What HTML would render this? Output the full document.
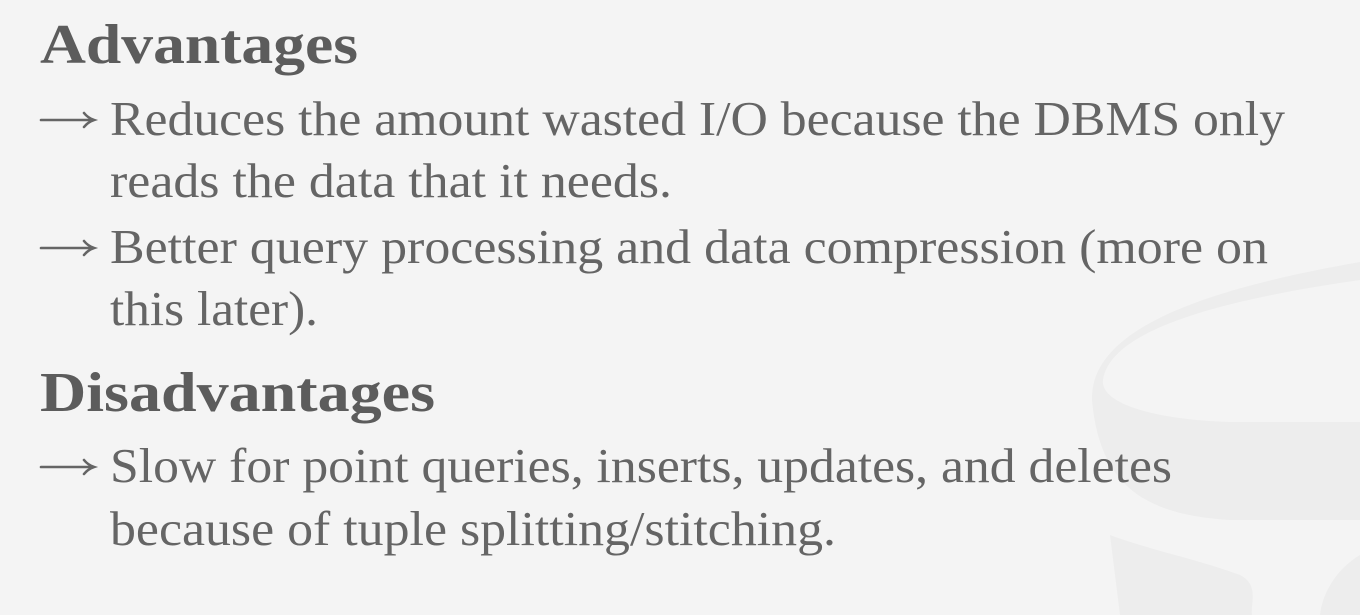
<!DOCTYPE html>
<html><head><meta charset="utf-8"><style>
html,body{margin:0;padding:0;background:#f4f4f4;width:1360px;height:615px;overflow:hidden}
svg{display:block}
text{font-family:"Liberation Serif",serif;fill:#656565}
.h{font-weight:bold;font-size:56px;fill:#5c5c5c}
.b{font-size:49px}
</style></head><body>
<svg width="1360" height="615" viewBox="0 0 1360 615" xmlns="http://www.w3.org/2000/svg">
<defs><g id="ar" fill="none" stroke="#656565" stroke-width="2.6" stroke-linecap="round"><path d="M41 0 H93"/><path d="M84 -7 Q88 -2 94 0 Q88 2 84 7"/></g></defs>
<rect width="1360" height="615" fill="#f4f4f4"/>
<g fill="#ededed">
<path d="M1092 400 C1090 330 1200 290 1360 262 L1360 280 C1220 300 1110 330 1103 380 C1100 405 1160 420 1230 422 L1360 422 L1360 520 L1230 520 C1150 515 1100 490 1092 400Z"/>
<path d="M1110 535 C1150 550 1200 560 1240 575 C1260 585 1250 605 1252 615 L1120 615 Z"/>
<path d="M1320 615 C1322 595 1335 570 1360 555 L1360 615 Z"/>
</g>
<text class="h" x="40" y="63" textLength="318" lengthAdjust="spacingAndGlyphs">Advantages</text>
<use href="#ar" y="120"/>
<text class="b" x="110" y="135" textLength="1175" lengthAdjust="spacingAndGlyphs">Reduces the amount wasted I/O because the DBMS only</text>
<text class="b" x="110" y="197" textLength="562" lengthAdjust="spacingAndGlyphs">reads the data that it needs.</text>
<use href="#ar" y="248"/>
<text class="b" x="110" y="263" textLength="1158" lengthAdjust="spacingAndGlyphs">Better query processing and data compression (more on</text>
<text class="b" x="110" y="325" textLength="208" lengthAdjust="spacingAndGlyphs">this later).</text>
<text class="h" x="40" y="411" textLength="395" lengthAdjust="spacingAndGlyphs">Disadvantages</text>
<use href="#ar" y="467"/>
<text class="b" x="110" y="482" textLength="1062" lengthAdjust="spacingAndGlyphs">Slow for point queries, inserts, updates, and deletes</text>
<text class="b" x="110" y="545" textLength="726" lengthAdjust="spacingAndGlyphs">because of tuple splitting/stitching.</text>
</svg>
</body></html>
